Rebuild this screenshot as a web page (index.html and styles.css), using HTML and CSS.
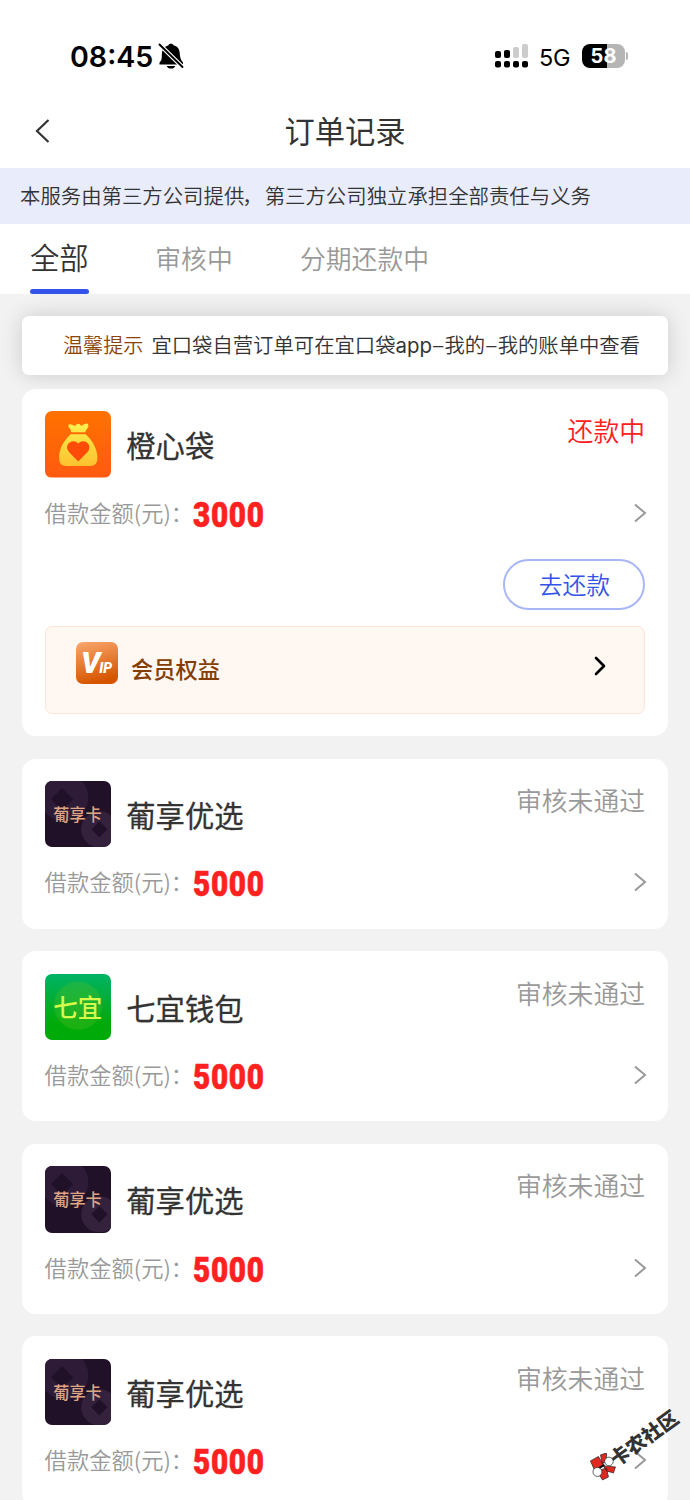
FILE: index.html
```html
<!DOCTYPE html>
<html lang="zh-CN">
<head>
<meta charset="utf-8">
<title>订单记录</title>
<link rel="stylesheet" href="styles.css">
</head>
<body>
<svg class="defs" width="0" height="0" aria-hidden="true">
  <defs>
    <linearGradient id="orange" x1="0" y1="0" x2="0" y2="1"><stop offset="0" stop-color="#ff7200"/><stop offset="1" stop-color="#ff5a10"/></linearGradient>
    <linearGradient id="gold" x1="0" y1="0" x2="0" y2="1"><stop offset="0" stop-color="#fff04e"/><stop offset="1" stop-color="#fdc22f"/></linearGradient>
    <symbol id="chev" viewBox="0 0 14 22"><path d="M2 2.500 L12 11 L2 19.500" fill="none" stroke="currentColor" stroke-width="2"/></symbol>
    <symbol id="coins" viewBox="0 0 66 66">
      <circle cx="19" cy="16" r="24" fill="#2e1b38"/><path d="M17 7 L28 18 L17 29 L6 18Z" fill="#201128"/>
      <circle cx="54" cy="48" r="18" fill="#34213b"/><path d="M54 40 L62 48 L54 56 L46 48Z" fill="#201128"/>
    </symbol>
  </defs>
</svg>
<div class="page">
  <header class="status">
    <div class="clock">08:45</div>
    <svg class="bell" width="26" height="28" viewBox="0 0 26 28">
      <path d="M1.500 22.500 V20.500 C4.500 18 3.500 15 4 10.500 C4.500 6.500 7.500 4 10.500 3.200 C11 1.200 15 1.200 15.500 3.200 C19.500 4.200 21.500 7 21.700 11 C22 15 22.500 18 25 20.500 V22.500Z M8.700 24 H17.300 C16.500 27.400 9.500 27.400 8.700 24Z"/>
      <path d="M1.500 2.500 L24.500 25" stroke="#fff" stroke-width="4.400"/>
      <path d="M1.500 2.500 L24.500 25" stroke="#000" stroke-width="1.900" stroke-linecap="round"/>
    </svg>
    <svg class="signal" width="34" height="26" viewBox="0 0 34 26">
      <g fill="#ccc"><rect x="18" y="4" width="6" height="11" rx="2"/><rect x="27" y="1" width="6" height="14" rx="2"/></g>
      <rect y="8" width="6" height="7" rx="2"/><rect x="9" y="7" width="6" height="8" rx="2"/>
      <rect y="18" width="6" height="6.500" rx="2"/><rect x="9" y="18" width="6" height="6.500" rx="2"/><rect x="18" y="18" width="6" height="6.500" rx="2"/><rect x="27" y="18" width="6" height="6.500" rx="2"/>
    </svg>
    <div class="net">5G</div>
    <div class="battery">58</div><div class="battery-tip"></div>
  </header>
  <nav class="nav">
    <svg class="back" width="18" height="26" viewBox="0 0 18 26"><path d="M14.500 2 L3 13 L14.500 24" fill="none" stroke="#333" stroke-width="2.200"/></svg>
    <h1 class="title">订单记录</h1>
  </nav>
  <div class="notice">本服务由第三方公司提供<span class="comma">，</span>第三方公司独立承担全部责任与义务</div>
  <div class="tabs">
    <div class="tab active">全部</div>
    <div class="tab">审核中</div>
    <div class="tab">分期还款中</div>
  </div>
  <main class="list">
    <div class="tip"><span class="tip-label">温馨提示</span><span>宜口袋自营订单可在宜口袋<span class="latin">app<span class="dash">–</span></span>我的<span class="latin dash">–</span>我的账单中查看</span></div>

    <section class="card first">
      <div class="head">
        <svg class="logo" viewBox="0 0 66 66">
          <rect width="66" height="66" fill="url(#orange)"/>
          <path d="M23 14 C25 12 28 14 30 15 C32 12 34 12 36 15 C39 13 42 11 43 14 C43.500 17 41 18 40 21 H26 C26 18 23 17 23 14Z M25.500 23 H40.500 C47 29 52 38 52 46 C52 52 50 54.500 45 54.500 H21 C16 54.500 14 52 14 46 C14 37 19 29 25.500 23Z" fill="url(#gold)"/>
          <path d="M33 50 L24 41 C19 35 24 30 28 30 C30.500 30 32 31 33 32.500 C34 31 35.500 30 38 30 C43 30 46.500 36 42 41Z" fill="#ff4b08"/>
        </svg>
        <h2 class="name">橙心袋</h2><span class="state due">还款中</span>
      </div>
      <div class="amount"><span>借款金额(元)：</span><b class="num">3000</b><svg class="go"><use href="#chev"/></svg></div>
      <div class="actions"><div class="pay">去还款</div></div>
      <div class="vip">
        <div class="vip-logo"><span class="v">V</span><span class="ip">IP</span></div>
        <span class="vip-text">会员权益</span>
        <svg class="vip-go" width="14" height="22" viewBox="0 0 14 22"><path d="M3 3 L11 11 L3 19" fill="none" stroke="#000" stroke-width="2.600" stroke-linecap="round" stroke-linejoin="round"/></svg>
      </div>
    </section>

    <section class="card">
      <div class="head">
        <div class="logo grape"><svg class="coins"><use href="#coins"/></svg><span class="logo-text">葡享卡</span></div>
        <h2 class="name">葡享优选</h2><span class="state">审核未通过</span>
      </div>
      <div class="amount"><span>借款金额(元)：</span><b class="num">5000</b><svg class="go"><use href="#chev"/></svg></div>
    </section>

    <section class="card">
      <div class="head">
        <div class="logo qiyi"><span class="logo-text">七宜</span></div>
        <h2 class="name">七宜钱包</h2><span class="state">审核未通过</span>
      </div>
      <div class="amount"><span>借款金额(元)：</span><b class="num">5000</b><svg class="go"><use href="#chev"/></svg></div>
    </section>

    <section class="card">
      <div class="head">
        <div class="logo grape"><svg class="coins"><use href="#coins"/></svg><span class="logo-text">葡享卡</span></div>
        <h2 class="name">葡享优选</h2><span class="state">审核未通过</span>
      </div>
      <div class="amount"><span>借款金额(元)：</span><b class="num">5000</b><svg class="go"><use href="#chev"/></svg></div>
    </section>

    <section class="card">
      <div class="head">
        <div class="logo grape"><svg class="coins"><use href="#coins"/></svg><span class="logo-text">葡享卡</span></div>
        <h2 class="name">葡享优选</h2><span class="state">审核未通过</span>
      </div>
      <div class="amount"><span>借款金额(元)：</span><b class="num">5000</b><svg class="go"><use href="#chev"/></svg></div>
    </section>
  </main>
  <div class="stamp">
    <svg class="stamp-logo" width="28" height="28" viewBox="0 0 28 28">
      <g stroke="#222" stroke-width=".7">
        <path d="M1 8 L9 3.500 L14 12 L5 17Z M11 2 L17 0 L17 8 L13 11Z M14 13 L26 14 L24 20 L17 18Z M11 17 L17 15 L19 24 L13 27 L10 22Z" fill="#e02a20"/>
        <circle cx="19.500" cy="8.500" r="4.300" fill="#fff"/><circle cx="8" cy="19" r="4.500" fill="#fff"/>
      </g>
      <path d="M10 15 L15 12" stroke="#111" stroke-width="2"/>
    </svg>
    <span class="stamp-text">卡农社区</span>
  </div>
</div>
</body>
</html>
```
FILE: styles.css
```css
* { box-sizing: border-box; }
body { margin: 0; background: #f2f2f2; color: #333; font-family: "Noto Sans CJK SC", sans-serif; }
h1, h2 { margin: 0; font-weight: 500; }
svg { display: block; flex: none; }
.defs { position: absolute; }
.page { position: relative; width: 690px; height: 1500px; overflow: hidden; background: #f2f2f2; white-space: nowrap; }

.status { display: flex; align-items: center; height: 96px; padding: 16px 62px 0 70px; background: #fff; color: #000; font-family: Inter, sans-serif; }
.clock { width: 88px; font-size: 28.6px; font-weight: 600; letter-spacing: 0; }
.signal { margin-left: auto; }
.net { margin-left: 10px; width: 33px; font-size: 23.5px; letter-spacing: -.3px; padding-top: 2px; }
.battery { margin-left: 10px; width: 43px; height: 24px; border-radius: 8px; background: linear-gradient(90deg, #000 58%, #b5b5b5 58%); color: #fff; font-size: 20px; line-height: 24px; font-weight: 700; text-align: center; }
.battery-tip { width: 2px; height: 8px; margin-left: 1px; border-radius: 0 3px 3px 0; background: #b5b5b5; }

.nav { display: grid; grid-template-columns: 1fr auto 1fr; align-items: center; height: 72px; padding: 0 34px; background: #fff; }
.title { margin-top: -5px; font-size: 30.3px; line-height: 66px; font-weight: 400; }
.back { margin-top: -3px; }

.notice { height: 56px; padding-left: 20px; background: #e9ecfb; font-size: 20.4px; line-height: 54px; font-weight: 350; }
.comma { display: inline-block; width: 1em; text-indent: -2px; }
.tabs { display: flex; gap: 67.300px; height: 70px; padding-left: 30px; background: #fff; color: #999; font-size: 25.8px; line-height: 68px; font-weight: 350; }
.active { display: flex; flex-direction: column; width: 59px; margin-right: -1px; color: #333; font-size: 29.3px; line-height: 65px; font-weight: 350; }
.active::after { content: ""; height: 5px; border-radius: 3px; background: #3354ea; }

.list { display: flex; flex-direction: column; gap: 22.4px; padding: 22px 22px 0; }
.tip { flex: none; height: 59px; padding-left: 41px; margin-bottom: -8.300px; border-radius: 7px; background: #fff; box-shadow: 0 0 22px rgba(0,0,0,.16); font-size: 20.35px; line-height: 57px; font-weight: 350; display: flex; gap: 8px; }
.tip-label { color: #8a4408; font-size: 20.1px; }
.latin { font-family: Inter, sans-serif; font-size: 20.4px; font-weight: 400; }
.dash { display: inline-block; width: 12.5px; text-align: center; line-height: 1; font-weight: 300; }
.card { position: relative; flex: none; height: 170.2px; padding: 22.300px 22.600px 22px 22.600px; border-radius: 14px; background: #fff; }
.first { height: 347.2px; }
.head { display: flex; height: 66.500px; }
.logo { position: relative; flex: none; width: 66.500px; height: 66.500px; border-radius: 7px; overflow: hidden; display: flex; align-items: center; justify-content: center; }
.name { margin-left: 15.200px; font-size: 29.3px; line-height: 66px; font-weight: 400; -webkit-text-stroke: .3px #333; }
.state { margin-left: auto; margin-right: .4px; color: #999; font-size: 25.8px; line-height: 37px; font-weight: 350; }
.due { color: #ff2020; }
.amount { display: flex; align-items: center; height: 70px; color: #999; font-size: 22.3px; font-weight: 350; line-height: 66px; }
.amount span { width: 148.300px; margin-top: -2px; }
.num { width: 72px; margin-top: 6px; color: #ff2020; font-family: Roboto, sans-serif; font-size: 35px; line-height: 68px; font-weight: 900; -webkit-text-stroke: .6px #ff2020; letter-spacing: .8px; transform: scaleX(.85); transform-origin: left; }
.go { width: 14px; height: 22px; margin-left: auto; margin-right: -1.400px; color: #999; }

.actions { display: flex; justify-content: flex-end; margin-top: 11.500px; }
.pay { width: 142px; height: 51px; border: 2px solid #a9b6f8; border-radius: 26px; color: #3354ea; font-size: 23.8px; line-height: 46px; text-align: center; font-weight: 350; }
.vip { display: flex; align-items: center; height: 88px; margin-top: 16px; padding: 0 37px 0 30px; border: 1.500px solid #fde6d8; border-radius: 7px; background: #fff7f1; }
.vip-logo { display: flex; align-items: baseline; justify-content: center; width: 42px; height: 42px; margin-top: -14px; border-radius: 7px; background: linear-gradient(165deg, #f9a870, #d65600 85%); color: #fff; font-family: Roboto, sans-serif; font-weight: 900; font-style: italic; line-height: 42px; }
.v { font-size: 30px; }
.ip { font-size: 14px; line-height: 14px; margin-left: -1px; }
.vip-text { margin-left: 13.500px; color: #843d02; font-size: 22.2px; font-weight: 500; line-height: 80px; margin-top: -5px; }
.vip-go { margin-left: auto; margin-top: -8px; }

.grape { background: #201128; color: #dda583; font-size: 17px; font-weight: 500; }
.coins { position: absolute; inset: 0; width: 66.500px; height: 66.500px; }
.grape .logo-text { position: relative; line-height: 64px; transform: scaleX(.95); }
.qiyi { background: radial-gradient(circle at 50% 48%, rgba(90,190,40,.4) 0, rgba(90,190,40,.3) 23px, transparent 25px), linear-gradient(#00b365, #00aa08 75%); color: #d6f94b; font-size: 24.500px; font-weight: 500; line-height: 66px; }

.stamp { position: absolute; left: 582px; top: 1429px; display: flex; align-items: center; width: 106px; height: 30px; transform: rotate(-36deg); }
.stamp-logo { transform: rotate(36deg); margin-right: -4px; }
.stamp-text { color: #333; font-size: 19.800px; font-weight: 900; line-height: 30px; }
```
